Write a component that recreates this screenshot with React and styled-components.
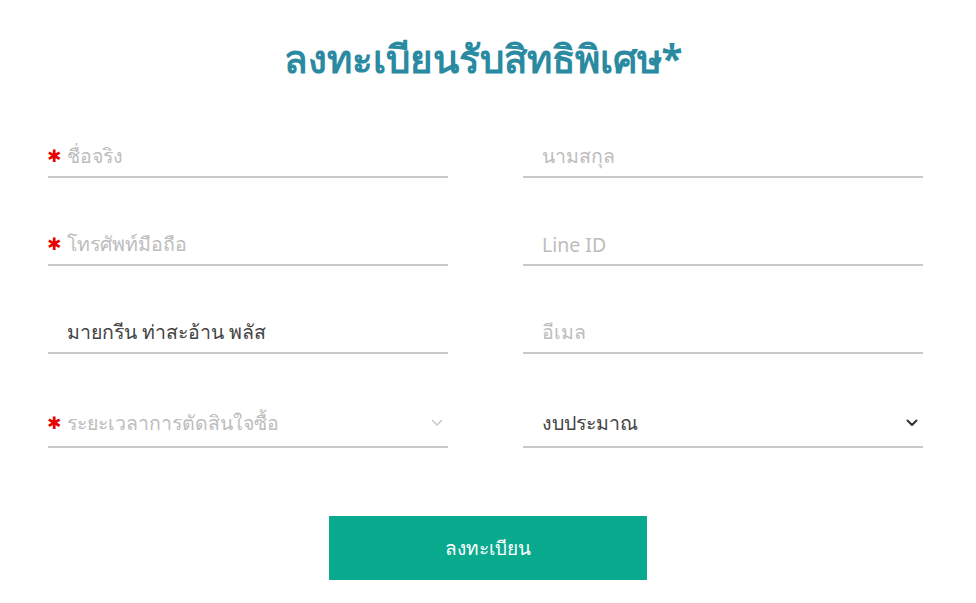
import React from "react";
import styled, { createGlobalStyle } from "styled-components";

const GlobalStyle = createGlobalStyle`
    html, body {
        margin: 0;
        padding: 0;
        background: #fff;
    }
    body {
        font-family: "Noto Sans", "DejaVu Sans", sans-serif;
    }
`

const Page = styled.div`
    width: 976px;
    min-height: 603px;
    box-sizing: border-box;
    padding: 36px 54px 0 48px;
    display: flex;
    flex-direction: column;
    align-items: stretch;
`

const Title = styled.h1`
    margin: 0 0 56px;
    text-align: center;
    font-size: 38.5px;
    line-height: 44px;
    font-weight: 700;
    color: #2a8aa1;
    padding-right: 4px;
`

const Grid = styled.div`
    display: grid;
    grid-template-columns: 400px 400px;
    column-gap: 75px;
    row-gap: 46px;
    align-items: end;
`

const Field = styled.div`
    position: relative;
    height: ${p => (p.$tall ? "48px" : "42px")};
    border-bottom: 2px solid #c9c9c9;
    display: flex;
    align-items: center;
    padding: 0 5px 0 19px;
    box-sizing: border-box;
`

const Star = styled.span`
    position: absolute;
    left: -1px;
    top: 50%;
    transform: translateY(-50%);
    color: #e60000;
    font-family: "DejaVu Sans", sans-serif;
    font-size: 17px;
    font-weight: 700;
    line-height: 1;
`

const Text = styled.span`
    flex: 1;
    font-size: 19.5px;
    color: ${p => (p.$value ? "#444" : "#bdbdbd")};
    white-space: nowrap;
`

const Chevron = styled.svg`
    width: 12px;
    height: 8px;
    flex-shrink: 0;
`

const Footer = styled.div`
    display: flex;
    justify-content: center;
    margin-top: 68px;
    padding-left: 6px;
`

const Button = styled.button`
    width: 318px;
    height: 64px;
    border: none;
    background: #0aaa8f;
    color: #fff;
    font-family: inherit;
    font-size: 19px;
    font-weight: 500;
    cursor: pointer;
`

const Arrow = ({ color, bold }) => (
    <Chevron viewBox="0 0 12 8">
        <path d="M1.5 1.5 L6 6 L10.5 1.5" fill="none" stroke={color} strokeWidth={bold ? 2 : 1.4} strokeLinecap="round" strokeLinejoin="round" />
    </Chevron>
)

const fields = [
    { label: "ชื่อจริง", required: true },
    { label: "นามสกุล" },
    { label: "โทรศัพท์มือถือ", required: true },
    { label: "Line ID" },
    { label: "มายกรีน ท่าสะอ้าน พลัส", value: true },
    { label: "อีเมล" },
]

const App = () => {
    return (
        <Page>
            <GlobalStyle />
            <Title>ลงทะเบียนรับสิทธิพิเศษ*</Title>
            <Grid>
                {fields.map((f, i) => (
                    <Field key={i}>
                        {f.required && <Star>✱</Star>}
                        <Text $value={f.value}>{f.label}</Text>
                    </Field>
                ))}
                <Field $tall>
                    <Star>✱</Star>
                    <Text>ระยะเวลาการตัดสินใจซื้อ</Text>
                    <Arrow color="#c4c4c4" />
                </Field>
                <Field $tall>
                    <Text $value>งบประมาณ</Text>
                    <Arrow color="#333" bold />
                </Field>
            </Grid>
            <Footer>
                <Button>ลงทะเบียน</Button>
            </Footer>
        </Page>
    )
}

export default App;
